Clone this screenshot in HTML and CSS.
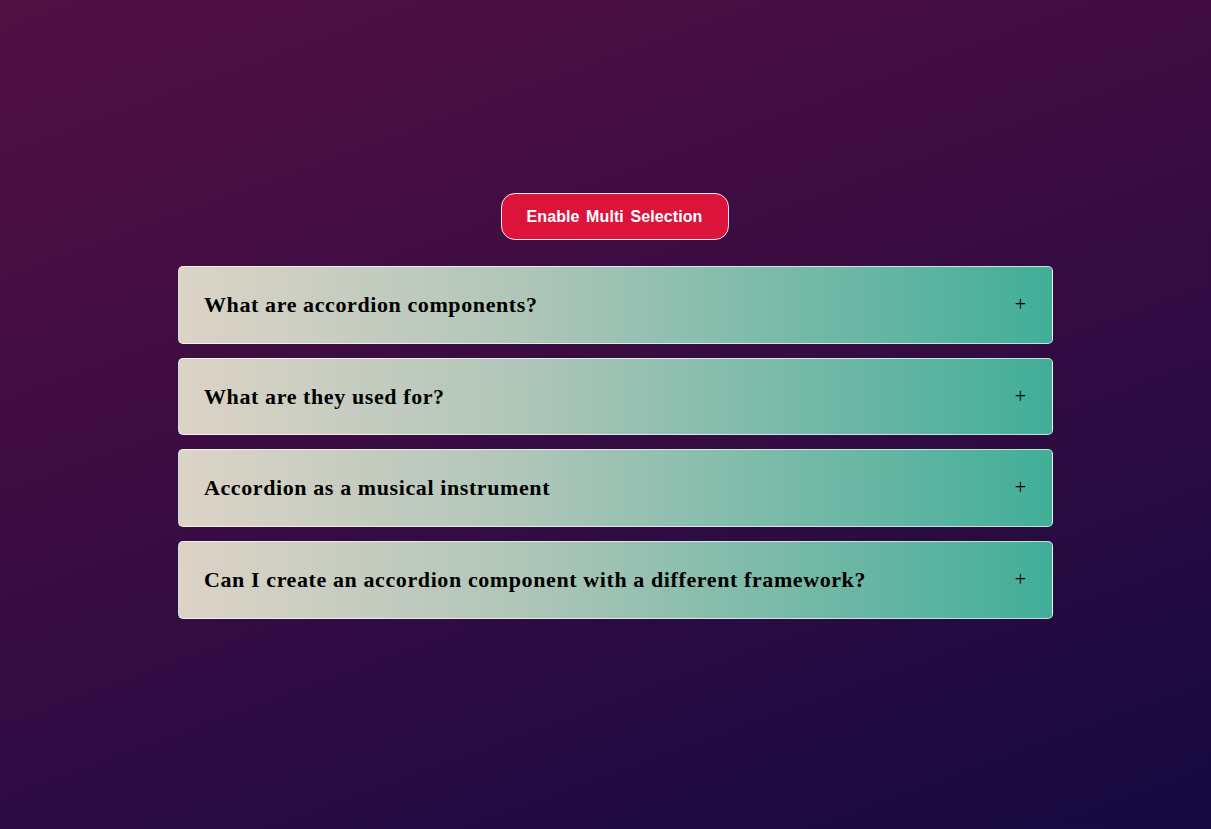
FILE: index.html
```html
<!DOCTYPE html>
<html>
<head>
<meta charset="utf-8">
<link rel="stylesheet" href="styles.css">
</head>
<body>
<div class="page">
  <button class="toggle">Enable Multi Selection</button>
  <div class="accordion">
    <div class="item"><span class="q">What are accordion components?</span><span class="plus">+</span></div>
    <div class="item"><span class="q">What are they used for?</span><span class="plus">+</span></div>
    <div class="item"><span class="q">Accordion as a musical instrument</span><span class="plus">+</span></div>
    <div class="item"><span class="q">Can I create an accordion component with a different framework?</span><span class="plus">+</span></div>
  </div>
</div>
</body>
</html>
```

FILE: styles.css
```css
html, body {
  margin: 0;
  height: 100%;
}
body {
  background: linear-gradient(160deg, #521043 0%, #3a0c42 45%, #140a40 100%);
  font-family: "Liberation Serif", "Times New Roman", serif;
}
.page {
  display: flex;
  flex-direction: column;
  align-items: center;
  padding-top: 193px;
  padding-left: 20px;
}
.toggle {
  width: 228px;
  height: 47px;
  margin-right: 2px;
  background: #dc143c;
  color: #fff;
  border: 1px solid #f2e6ea;
  border-radius: 14px;
  font-family: "Liberation Sans", Arial, sans-serif;
  font-weight: bold;
  font-size: 16px;
  word-spacing: 2px;
  letter-spacing: 0.1px;
  cursor: pointer;
}
.accordion {
  margin-top: 26px;
  width: 875px;
  display: flex;
  flex-direction: column;
  gap: 14px;
}
.item {
  box-sizing: border-box;
  height: 77.7px;
  display: flex;
  align-items: center;
  justify-content: space-between;
  padding: 0 26px 0 25px;
  border: 1px solid rgba(255, 255, 255, 0.65);
  border-radius: 5px;
  background: linear-gradient(to right, #ddd3c7 0%, #aec6b8 40%, #41ae98 100%);
}
.q {
  font-weight: bold;
  font-size: 22px;
  color: #000;
  letter-spacing: 0.6px;
}
.plus {
  font-size: 20px;
  color: #000;
  margin-top: -1px;
}
```
